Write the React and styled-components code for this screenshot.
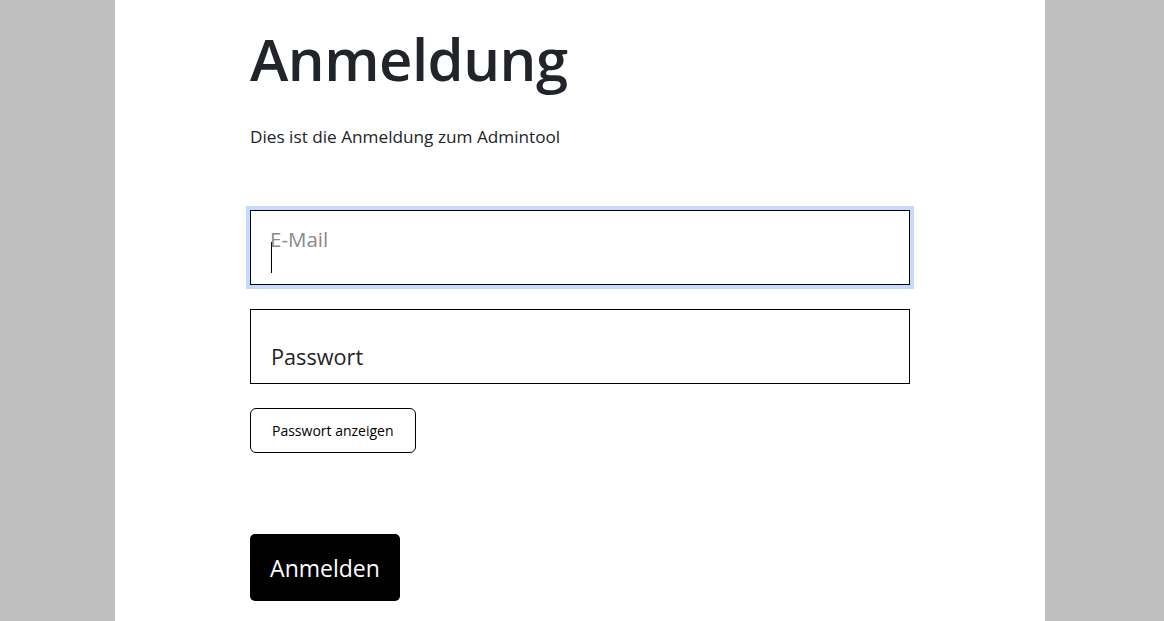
import React from 'react';
import styled,{createGlobalStyle} from 'styled-components';

const Global=createGlobalStyle`
  html,body{
    margin:0;
    padding:0;
    background:#bfbfbf;
    font-family:"Open Sans","Noto Sans",sans-serif;
    color:#212529;
  }
`
const Page=styled.div`
  width:930px;
  min-height:621px;
  margin:0 119px 0 115px;
  background:#fff;
  box-sizing:border-box;
  padding:24px 135px 0 135px;
  display:flex;
  flex-direction:column;
  align-items:flex-start;
`
const Title=styled.h1`
  font-size:58px;
  font-weight:600;
  line-height:1.2;
  margin:0;
  letter-spacing:-0.5px;
`
const Intro=styled.p`
  font-size:17.2px;
  line-height:1.5;
  margin:30px 0 61px 0;
`
const Field=styled.div`
  position:relative;
  width:660px;
  height:75px;
  box-sizing:border-box;
  border:1px solid #000;
  padding:0 20px 11px 20px;
  display:flex;
  align-items:flex-end;
  margin-bottom:24px;
  box-shadow:${p=>p.$focused?'0 0 0 4px #c3dbfe':'none'};
`
const Label=styled.span`
  position:absolute;
  left:19px;
  top:14px;
  font-size:20.5px;
  color:#8a8a8a;
`
const Caret=styled.span`
  width:1px;
  height:31px;
  background:#000;
`
const Value=styled.span`
  font-size:21.7px;
  line-height:31px;
  color:#212529;
`
const ToggleButton=styled.button`
  font-family:inherit;
  font-size:14px;
  color:#000;
  background:#fff;
  border:1px solid #000;
  border-radius:6px;
  height:45px;
  padding:0 21px;
  margin-top:0;
  cursor:pointer;
`
const SubmitButton=styled.button`
  font-family:inherit;
  font-size:23px;
  color:#fff;
  background:#000;
  border:none;
  border-radius:5px;
  width:150px;
  height:67px;
  margin-top:81px;
  cursor:pointer;
`

function App(){
  return(
    <>
      <Global/>
      <Page>
        <Title>Anmeldung</Title>
        <Intro>Dies ist die Anmeldung zum Admintool</Intro>
        <Field $focused>
          <Label>E-Mail</Label>
          <Caret/>
        </Field>
        <Field>
          <Value>Passwort</Value>
        </Field>
        <ToggleButton>Passwort anzeigen</ToggleButton>
        <SubmitButton>Anmelden</SubmitButton>
      </Page>
    </>
  )
}

export default App;
